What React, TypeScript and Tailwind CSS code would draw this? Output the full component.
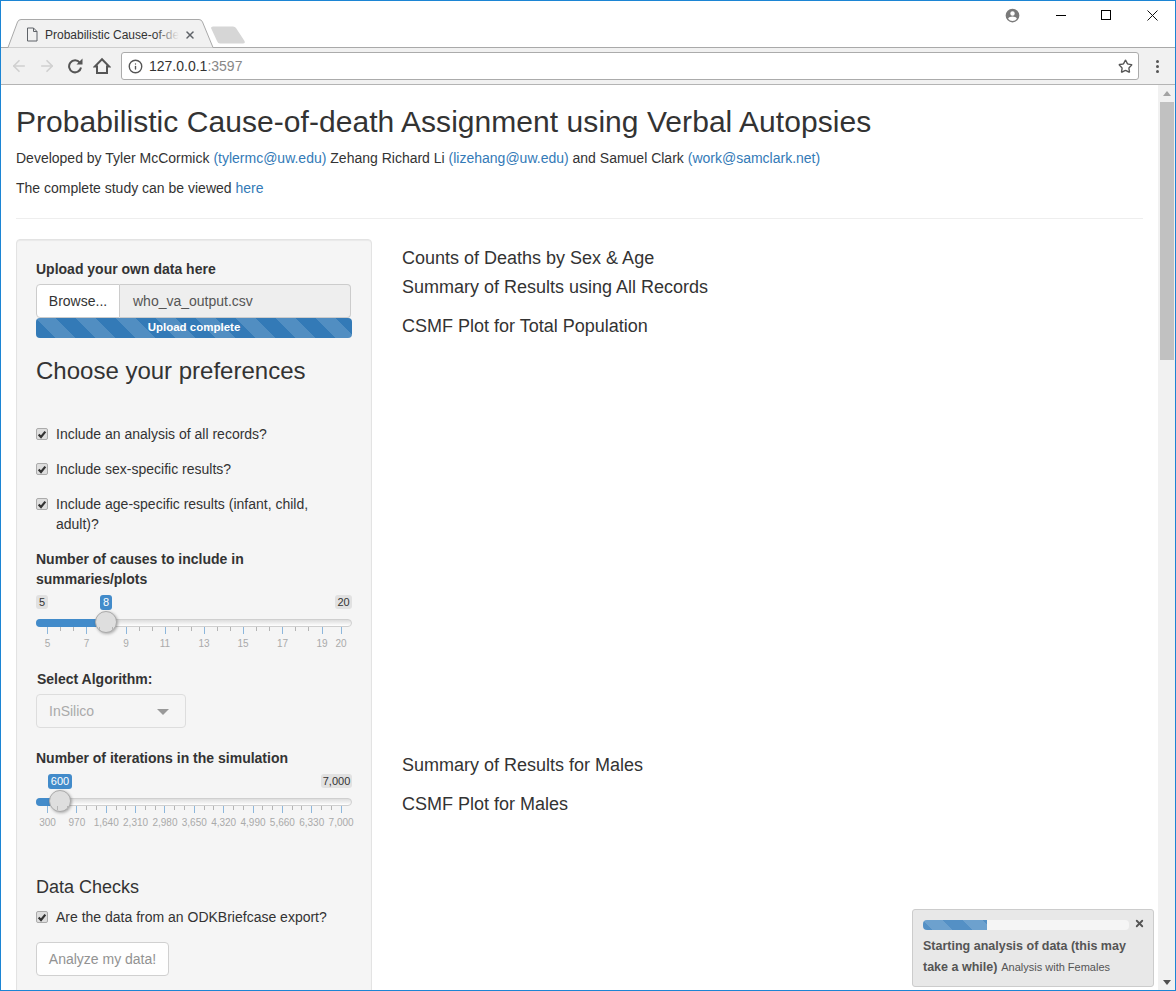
import { ArrowLeft, ArrowRight, Info, Star, X } from 'lucide-react';

const stripes =
    'bg-[linear-gradient(45deg,rgba(255,255,255,.15)_25%,transparent_25%,transparent_50%,rgba(255,255,255,.15)_50%,rgba(255,255,255,.15)_75%,transparent_75%,transparent)] bg-[length:40px_40px]';

interface SliderProps {
    value: string;
    valueLeft: number;
    valueWidth: number;
    handle: number;
    minLabel: string;
    maxLabel: string;
    maxWidth: number;
    minWidth: number;
    majors: { x: number; label: string }[];
}

function Slider({ value, valueLeft, valueWidth, handle, minLabel, maxLabel, minWidth, maxWidth, majors }: SliderProps) {
    const minors: number[] = [];
    for (let i = 0; i < majors.length - 1; i++) {
        const gap = majors[i + 1].x - majors[i].x;
        if (gap > 25) {
            for (let j = 1; j < 3; j++) minors.push(Math.round(majors[i].x + (gap * j) / 3));
        }
    }
    return (
        <div className="relative h-[60px] w-[316px] text-[#333]">
            {minLabel && (
                <span className="absolute top-0 left-0 rounded-[3px] bg-[#e1e1e1] text-center text-[11px] leading-[14px] text-[#333]" style={{ width: minWidth }}>
                    {minLabel}
                </span>
            )}
            <span className="absolute top-0 rounded-[3px] bg-[#428bca] text-center text-[11px] leading-[15px] text-white" style={{ left: valueLeft, width: valueWidth }}>
                {value}
            </span>
            <span className="absolute top-0 right-0 rounded-[3px] bg-[#e1e1e1] text-center text-[11px] leading-[14px] text-[#333]" style={{ width: maxWidth }}>
                {maxLabel}
            </span>
            <div className="absolute top-[24px] right-0 left-0 h-[8px] rounded-full border border-[#cfcfcf] bg-gradient-to-b from-[#dddddd] to-white" />
            <div className="absolute top-[24px] left-0 h-[8px] rounded-l-full bg-[#428bca]" style={{ width: handle }} />
            <div className="absolute top-[16px] h-[22px] w-[22px] rounded-full border border-[#ababab] bg-[#dedede] shadow-[1px_1px_3px_rgba(0,0,0,0.3)]" style={{ left: handle - 11 }} />
            {minors.map((x) => (
                <div key={x} className="absolute top-[32px] h-[4px] w-px bg-[#b5b5b5]" style={{ left: x }} />
            ))}
            {majors.map((m) => (
                <div key={m.x} className="absolute top-[32px] h-[7px] w-px bg-[#8db7dc]" style={{ left: Math.round(m.x) }} />
            ))}
            {majors.map((m) => (
                <span key={m.label} className="absolute top-[42px] w-[40px] -translate-x-1/2 text-center text-[10px] leading-[14px] text-[#aaaaaa]" style={{ left: m.x + 0.5 }}>
                    {m.label}
                </span>
            ))}
        </div>
    );
}

function Check({ children, className }: { children: React.ReactNode; className?: string }) {
    return (
        <label className={`flex items-start gap-[8px] text-[14px] leading-[20px] ${className ?? ''}`}>
            <span className="mt-[4px] flex h-[12px] w-[12px] shrink-0 items-center justify-center rounded-[2px] border border-[#ababab] bg-[#dedede]">
                <svg viewBox="0 0 12 12" className="h-[11px] w-[11px]">
                    <path d="M2 6 4.800 9 10 2.500" fill="none" stroke="#333" strokeWidth="2.600" />
                </svg>
            </span>
            <span>{children}</span>
        </label>
    );
}

function Link({ children }: { children: React.ReactNode }) {
    return <a className="text-[#337ab7]">{children}</a>;
}

const causesTicks = [
    { x: 11, label: '5' },
    { x: 50, label: '7' },
    { x: 89.5, label: '9' },
    { x: 128.5, label: '11' },
    { x: 167.5, label: '13' },
    { x: 206.5, label: '15' },
    { x: 246, label: '17' },
    { x: 285.5, label: '19' },
    { x: 304.5, label: '20' },
];

const iterationTicks = ['300', '970', '1,640', '2,310', '2,980', '3,650', '4,320', '4,990', '5,660', '6,330', '7,000'].map(
    (label, i) => ({ x: 11 + i * 29.36, label }),
);

export default function App() {
    return (
        <div className="relative flex h-[991px] w-[1176px] flex-col overflow-hidden border border-[#1c85d4] bg-white font-['Liberation_Sans',Arial,sans-serif] text-[14px] text-[#333]">
            {/* title bar */}
            <div className="relative h-[47px] shrink-0 border-b border-[#a9a9a9] bg-white">
                <svg className="absolute top-[18px] left-[3px]" width="245" height="30" viewBox="0 0 245 30">
                    <path d="M-4 28.500 H4 L13.500 3 Q14.500 .5 17 .5 H195 Q197.500 .5 198.500 3 L209 28.500" fill="#f1f1f1" stroke="#a9a9a9" />
                    <path d="M207 9 Q207 7.500 209 7.500 H229 Q231 7.500 232 9 L240.500 22 Q241.500 24.500 239 24.500 H216 Q214 24.500 213 22 Z" fill="#d6d6d6" />
                </svg>
                <svg className="absolute top-[26px] left-[25px]" width="12" height="15" viewBox="0 0 12 15">
                    <path d="M1.500 1h6l3.500 3.500V14h-9.500zM7.500 1v3.500H11" fill="none" stroke="#5f6368" />
                </svg>
                <span className="absolute top-[26px] left-[44px] w-[134px] overflow-hidden text-[12px] leading-[16px] whitespace-nowrap text-[#333]">
                    Probabilistic Cause-of-de
                    <span className="absolute top-0 right-0 h-full w-[24px] bg-gradient-to-r from-transparent to-[#f1f1f1]" />
                </span>
                <X className="absolute top-[28px] left-[183px] text-[#5f6368]" size={12} strokeWidth={3} />

                <svg className="absolute top-[7px] left-[1004px]" width="15" height="15" viewBox="0 0 24 24">
                    <path fill="#7a7a7a" d="M12 1a11 11 0 1 0 0 22 11 11 0 0 0 0-22zm0 4a3.600 3.600 0 1 1 0 7.200A3.600 3.600 0 0 1 12 5zm0 15.600a8.600 8.600 0 0 1-7-3.600c.1-2.300 4.700-3.500 7-3.500s6.900 1.200 7 3.500a8.600 8.600 0 0 1-7 3.600z" />
                </svg>
                <div className="absolute top-[14px] left-[1055px] h-px w-[10px] bg-black" />
                <div className="absolute top-[9px] left-[1100px] h-[10px] w-[10px] border border-black" />
                <svg className="absolute top-[9px] left-[1146px]" width="11" height="11" viewBox="0 0 11 11">
                    <path d="M.5.5l10 10M10.500.5l-10 10" stroke="#111" fill="none" />
                </svg>
            </div>

            {/* toolbar */}
            <div className="flex h-[37px] shrink-0 items-center border-b border-[#b4b4b4] bg-[#f1f1f1]">
                <ArrowLeft className="ml-[9px] text-[#d0d0d0]" size={18} strokeWidth={2.2} />
                <ArrowRight className="ml-[10px] text-[#d0d0d0]" size={18} strokeWidth={2.2} />
                <svg className="ml-[11px]" width="16" height="16" viewBox="0 0 16 16">
                    <path d="M12.800 4.600A6 6 0 1 0 14 9.500" fill="none" stroke="#555" strokeWidth="2" />
                    <path d="M9.500 6.500h6v-6z" fill="#555" />
                </svg>
                <svg className="ml-[10px]" width="18" height="18" viewBox="0 0 18 18">
                    <path d="M9 2.200 1.800 9.500H4V16h10V9.500h2.200z" fill="none" stroke="#555" strokeWidth="2" />
                </svg>
                <div className="ml-[10px] flex h-[28px] w-[1018px] items-center rounded-[3px] border border-[#ababab] bg-white pr-[5px] pl-[6px]">
                    <Info className="text-[#555]" size={15} strokeWidth={2.2} />
                    <span className="ml-[6px] text-[14px] text-[#333]">
                        127.0.0.1<span className="text-[#888]">:3597</span>
                    </span>
                    <Star className="ml-auto text-[#555]" size={15} strokeWidth={2.2} />
                </div>
                <div className="ml-[17px] flex flex-col gap-[2px]">
                    <span className="h-[3px] w-[3px] rounded-full bg-[#555]" />
                    <span className="h-[3px] w-[3px] rounded-full bg-[#555]" />
                    <span className="h-[3px] w-[3px] rounded-full bg-[#555]" />
                </div>
            </div>

            {/* page */}
            <div className="flex min-h-0 flex-1">
                <main className="min-w-0 flex-1 overflow-hidden pr-[15px] pl-[15px]">
                    <h2 className="mt-[20px] text-[30px] leading-[33px] font-normal tracking-[0.05px]">Probabilistic Cause-of-death Assignment using Verbal Autopsies</h2>
                    <p className="mt-[10px] leading-[20px]">
                        Developed by Tyler McCormick <Link>(tylermc@uw.edu)</Link> Zehang Richard Li <Link>(lizehang@uw.edu)</Link> and Samuel Clark <Link>(work@samclark.net)</Link>
                    </p>
                    <p className="mt-[10px] leading-[20px]">
                        The complete study can be viewed <Link>here</Link>
                    </p>
                    <hr className="mt-[20px] border-[#eeeeee]" />

                    <div className="mt-[20px] flex">
                        <aside className="h-[800px] w-[356px] shrink-0 rounded-[4px] border border-[#e3e3e3] bg-[#f5f5f5] px-[19px] pt-[19px] shadow-[inset_0_1px_1px_rgba(0,0,0,0.05)]">
                            <div className="font-bold">Upload your own data here</div>
                            <div className="mt-[4px] flex h-[34px] w-[315px]">
                                <div className="flex w-[84px] items-center justify-center rounded-l-[4px] border border-[#cccccc] bg-white">Browse...</div>
                                <div className="flex flex-1 items-center rounded-r-[4px] border border-l-0 border-[#cccccc] bg-[#eeeeee] pl-[13px] text-[#555]">who_va_output.csv</div>
                            </div>
                            <div className={`flex h-[20px] w-[316px] items-center justify-center rounded-[4px] bg-[#337ab7] text-[11.5px] font-bold text-white ${stripes}`}>Upload complete</div>
                            <h3 className="mt-[20px] text-[24px] leading-[26px] font-normal">Choose your preferences</h3>

                            <Check className="mt-[40px]">Include an analysis of all records?</Check>
                            <Check className="mt-[15px]">Include sex-specific results?</Check>
                            <Check className="mt-[15px] w-[290px]">Include age-specific results (infant, child, adult)?</Check>

                            <div className="mt-[15px] w-[300px] leading-[20px] font-bold">Number of causes to include in summaries/plots</div>
                            <div className="mt-[6px]">
                                <Slider value="8" valueLeft={64} valueWidth={12} handle={70} minLabel="5" maxLabel="20" minWidth={12} maxWidth={17} majors={causesTicks} />
                            </div>

                            <div className="mt-[14px] ml-[1px] leading-[20px] font-bold">Select Algorithm:</div>
                            <div className="mt-[5px] flex h-[34px] w-[150px] items-center rounded-[4px] border border-[#dddddd] bg-[#f5f5f5] pl-[12px] text-[#aaaaaa]">
                                InSilico
                                <span className="mt-[1px] ml-[63px] h-0 w-0 border-x-[6px] border-t-[6px] border-x-transparent border-t-[#999999]" />
                            </div>

                            <div className="mt-[20px] leading-[20px] font-bold">Number of iterations in the simulation</div>
                            <div className="mt-[6px]">
                                <Slider value="600" valueLeft={12} valueWidth={24} handle={24} minLabel="" maxLabel="7,000" minWidth={0} maxWidth={31} majors={iterationTicks} />
                            </div>

                            <h4 className="mt-[43px] text-[18px] leading-[20px] font-normal">Data Checks</h4>
                            <Check className="mt-[10px]">Are the data from an ODKBriefcase export?</Check>
                            <div className="mt-[15px] flex h-[34px] w-[133px] items-center justify-center rounded-[4px] border border-[#cccccc] bg-white text-[#888] opacity-90">Analyze my data!</div>
                        </aside>

                        <section className="ml-[30px] min-w-0 flex-1 text-[18px] leading-[20px]">
                            <div className="mt-[9px]">Counts of Deaths by Sex &amp; Age</div>
                            <div className="mt-[9px]">Summary of Results using All Records</div>
                            <div className="mt-[19px]">CSMF Plot for Total Population</div>
                            <div className="mt-[419px]">Summary of Results for Males</div>
                            <div className="mt-[19px]">CSMF Plot for Males</div>
                        </section>
                    </div>
                </main>

                {/* scrollbar */}
                <div className="flex w-[17px] shrink-0 flex-col items-center bg-[#f1f1f1]">
                    <span className="mt-[6px] h-0 w-0 border-x-[4px] border-b-[5px] border-x-transparent border-b-[#a3a3a3]" />
                    <div className="mt-[6px] h-[258px] w-[14px] bg-[#c1c1c1]" />
                    <span className="mt-auto mb-[5px] h-0 w-0 border-x-[4px] border-t-[5px] border-x-transparent border-t-[#505050]" />
                </div>
            </div>

            {/* shiny notification */}
            <div className="absolute top-[908px] left-[911px] h-[78px] w-[242px] rounded-[3px] border border-[#cccccc] bg-[#e8e8e8] pt-[10px] pr-[10px] pl-[10px] text-[#555]">
                <div className="h-[10px] w-[206px] overflow-hidden rounded-[4px] bg-[#f5f5f5]">
                    <div className={`h-full w-[64px] bg-[#5490c5] ${stripes}`} />
                </div>
                <X className="absolute top-[8px] right-[8px] text-[#555]" size={11} strokeWidth={4} />
                <div className="mt-[5px] leading-[20px]">
                    <span className="text-[12.5px] font-bold">Starting analysis of data (this may take a while)</span> <span className="text-[11px]">Analysis with Females</span>
                </div>
            </div>
        </div>
    );
}
